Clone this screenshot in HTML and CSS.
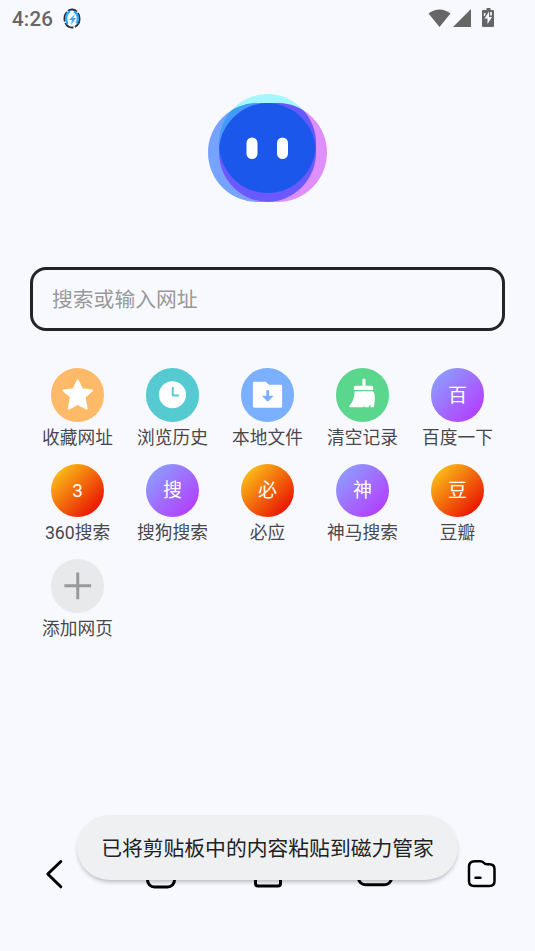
FILE: index.html
```html
<!DOCTYPE html>
<html lang="zh-CN">
<head>
<meta charset="utf-8">
<title>主页</title>
<link rel="stylesheet" href="styles.css">
</head>
<body>
<header class="status">
  <span class="time">4:26</span>
  <svg class="app-mark" width="18" height="21" viewBox="0 0 18 21">
    <ellipse cx="9" cy="10.5" rx="7.600" ry="9" fill="#f4fbff" stroke="#203044" stroke-width="1.800" stroke-dasharray="10 1.500"/>
    <path d="M4.500 16C2 11 3 5 7 3.500M11 3.500c4 2 5 7 2.500 12" fill="none" stroke="#28a9fa" stroke-width="2.200"/>
    <path d="M12 6l-6 6h3l-1 5 5-7h-3z" fill="#4aa3eb"/>
  </svg>
  <svg class="signals" width="68" height="22" viewBox="0 0 68 22" fill="#666">
    <path d="M.5 5.500Q11.500-2.500 22.500 5.500L11.500 19z"/>
    <path d="M43 1v18H25z"/>
    <path d="M56 2h2.500V0h4v2H65q1 0 1 1v15q0 1-1 1H55q-1 0-1-1V3q0-1 1-1z"/>
    <path d="M61 3.500l-4.500 7h3V16l4.500-7h-3z" fill="#f8f9ff"/>
    <path d="M55.800 5h2l-.8 3h-1.200zM62 4h2v3.500h-2z" fill="#e5e6eb"/>
  </svg>
</header>
<main>
  <svg class="logo" width="119" height="108" viewBox="0 0 119 108">
    <defs>
      <clipPath id="left"><rect x="0" y="9" width="108" height="99" rx="49.500"/></clipPath>
      <clipPath id="right"><rect x="11" y="9" width="108" height="99" rx="49.500"/></clipPath>
    </defs>
    <ellipse cx="59.500" cy="49.500" rx="48.500" ry="49.500" fill="#a4f7ff"/>
    <rect x="0" y="9" width="108" height="99" rx="49.500" fill="#75a3ff"/>
    <rect x="11" y="9" width="108" height="99" rx="49.500" fill="#df8ffb"/>
    <g clip-path="url(#left)">
      <ellipse cx="59.500" cy="49.500" rx="48.500" ry="49.500" fill="#3f9cfa"/>
      <rect x="11" y="9" width="108" height="99" rx="49.500" fill="#6a59fd"/>
    </g>
    <g clip-path="url(#right)">
      <ellipse cx="59.500" cy="49.500" rx="48.500" ry="49.500" fill="#6658ff"/>
      <g clip-path="url(#left)"><ellipse cx="59.500" cy="49.500" rx="48.500" ry="49.500" fill="#1b57eb"/></g>
    </g>
    <rect x="38.500" y="43.500" width="11" height="21.500" rx="5.500" fill="#fff"/>
    <rect x="69" y="43.500" width="11" height="21.500" rx="5.500" fill="#fff"/>
  </svg>
  <div class="search">搜索或输入网址</div>
  <section class="shortcuts">
    <div class="item"><div class="disc star"><svg width="54" height="54" viewBox="0 0 54 54"><path d="M27 12.500l4.300 9 10 1.200-7.400 6.700 2.100 11.600-9-4.800-9 4.800 2.100-11.600-7.400-6.700 10-1.200z" fill="#fff" stroke="#fff" stroke-width="2" stroke-linejoin="round"/></svg></div><span>收藏网址</span></div>
    <div class="item"><div class="disc clock"><svg width="54" height="54" viewBox="0 0 54 54"><circle cx="26.700" cy="27" r="13.700" fill="#fff"/><path d="M27 20v7.700h5.500" fill="none" stroke="#55cad1" stroke-width="2" stroke-linecap="round" stroke-linejoin="round"/></svg></div><span>浏览历史</span></div>
    <div class="item"><div class="disc files"><svg width="54" height="54" viewBox="0 0 54 54"><path d="M13.500 14h11.500l3 3h12q1.500 0 1.500 1.500v20q0 1.500-1.500 1.500h-26.500q-1.500 0-1.500-1.500v-23q0-1.500 1.500-1.500z" fill="#fff"/><path d="M25.500 22.500h3v5.500H33L27 34l-6-6h4.500z" fill="#7bafff"/></svg></div><span>本地文件</span></div>
    <div class="item"><div class="disc clean"><svg width="54" height="54" viewBox="0 0 54 54" fill="#fff"><path d="M28.200 10.500q1.600 0 1.600 1.800V18H36q1.600 0 1.600 1.600v2.600H18v-2.600Q18 18 19.600 18h7V12.300q0-1.800 1.600-1.800zM18.800 23.500h17.400q2.800 0 3 6 .2 5.500-1.200 10h-3l-.6-2.800-1.400 3h-4.200l-.3-2-1 2H14q-1.500-.2-.7-1.300 5.200-5 5.500-14.900z"/></svg></div><span>清空记录</span></div>
    <div class="item"><div class="disc violet">百</div><span>百度一下</span></div>
    <div class="item"><div class="disc orange">3</div><span>360搜索</span></div>
    <div class="item"><div class="disc violet">搜</div><span>搜狗搜索</span></div>
    <div class="item"><div class="disc orange">必</div><span>必应</span></div>
    <div class="item"><div class="disc violet">神</div><span>神马搜索</span></div>
    <div class="item"><div class="disc orange">豆</div><span>豆瓣</span></div>
    <div class="item"><div class="disc add"><svg width="54" height="54" viewBox="0 0 54 54"><path d="M27 13.500v27M13.500 27h27" stroke="#999" stroke-width="3"/></svg></div><span>添加网页</span></div>
  </section>
</main>
<nav class="bar">
  <svg width="36" height="36" viewBox="0 0 36 36"><path d="M24.800 5.500L11.800 18 24.800 30.800"/></svg>
  <svg width="36" height="36" viewBox="0 0 36 36"><rect x="4.500" y="5" width="27" height="26" rx="7"/></svg>
  <svg width="36" height="36" viewBox="0 0 36 36"><path d="M5.500 14v13.500q0 2.500 2.500 2.500h20q2.500 0 2.500-2.500V14L18 5z"/></svg>
  <svg width="36" height="36" viewBox="0 0 36 36"><rect x="1.500" y="7" width="33" height="21.800" rx="7"/></svg>
  <svg width="36" height="36" viewBox="0 0 36 36"><path d="M11 5.200h5.200q2.200 0 3.500 1.500 1.300 1.500 3.300 1.500h2.500q5 0 5 5V25q0 5-5 5H10q-5 0-5-5V10.700q0-5.500 6-5.500zM11.500 21.800h5" stroke-width="2.500"/></svg>
</nav>
<div class="toast">已将剪贴板中的内容粘贴到磁力管家</div>
</body>
</html>
```
FILE: styles.css
```css
* { box-sizing: border-box; }

body {
  margin: 0;
  height: 951px;
  overflow: hidden;
  display: flex;
  flex-direction: column;
  background: #f8f9ff;
  font-family: Roboto, "Noto Sans CJK SC", sans-serif;
  color: #48484c;
}

svg { display: block; }

.status {
  height: 36px;
  padding: 0 39px 0 12px;
  display: flex;
  align-items: center;
  color: #666;
}

.time {
  padding-top: 1px;
  font-size: 20.5px;
  font-weight: 500;
  letter-spacing: .2px;
}

.app-mark { margin-left: 10px; }
.signals { margin: 1px 0 0 auto; }

main { flex: 1; }

.logo { margin: 58px auto 0 208px; }

.search {
  height: 64px;
  margin: 65px 30px 0;
  padding: 0 19px 3px;
  border: 3px solid #242426;
  border-radius: 16px;
  display: flex;
  align-items: center;
  font-size: 20.8px;
  color: #999;
}

.shortcuts {
  margin: 37px 30px 0;
  display: grid;
  grid-template-columns: repeat(5, 95px);
  grid-auto-rows: 95.5px;
}

.item {
  display: flex;
  flex-direction: column;
  align-items: center;
  font-size: 17.7px;
  line-height: 30px;
  white-space: nowrap;
}

.disc {
  width: 53.5px;
  height: 53.5px;
  margin-bottom: 1px;
  flex: none;
  border-radius: 50%;
  display: flex;
  align-items: center;
  justify-content: center;
  color: #fff;
  font-size: 19px;
}

.disc svg {
  width: 100%;
  height: 100%;
}

.star { background: #ffba69; }
.clock { background: #55cad1; }
.files { background: #7bafff; }
.clean { background: #5bd68d; }
.add { background: #e8e9eb; }
.violet { background: linear-gradient(135deg, #8c9eff 10%, #b43cff 90%); }
.orange { background: linear-gradient(135deg, #fbc218 10%, #e90d00 90%); }

.violet, .orange { padding-top: 2px; }

.bar {
  height: 95px;
  display: grid;
  grid-template-columns: repeat(5, 1fr);
  justify-items: center;
  align-items: start;
}

.bar svg {
  fill: none;
  stroke: #000;
  stroke-width: 3;
  stroke-linecap: round;
  stroke-linejoin: round;
}

.toast {
  position: absolute;
  left: 77px;
  top: 815px;
  width: 381px;
  height: 65px;
  padding-bottom: 2px;
  border-radius: 33px;
  background: #eff0f2;
  box-shadow: 0 3px 4px -1px rgba(0, 0, 0, .26);
  display: flex;
  align-items: center;
  justify-content: center;
  font-size: 20.8px;
  color: #202124;
  white-space: nowrap;
}
```
